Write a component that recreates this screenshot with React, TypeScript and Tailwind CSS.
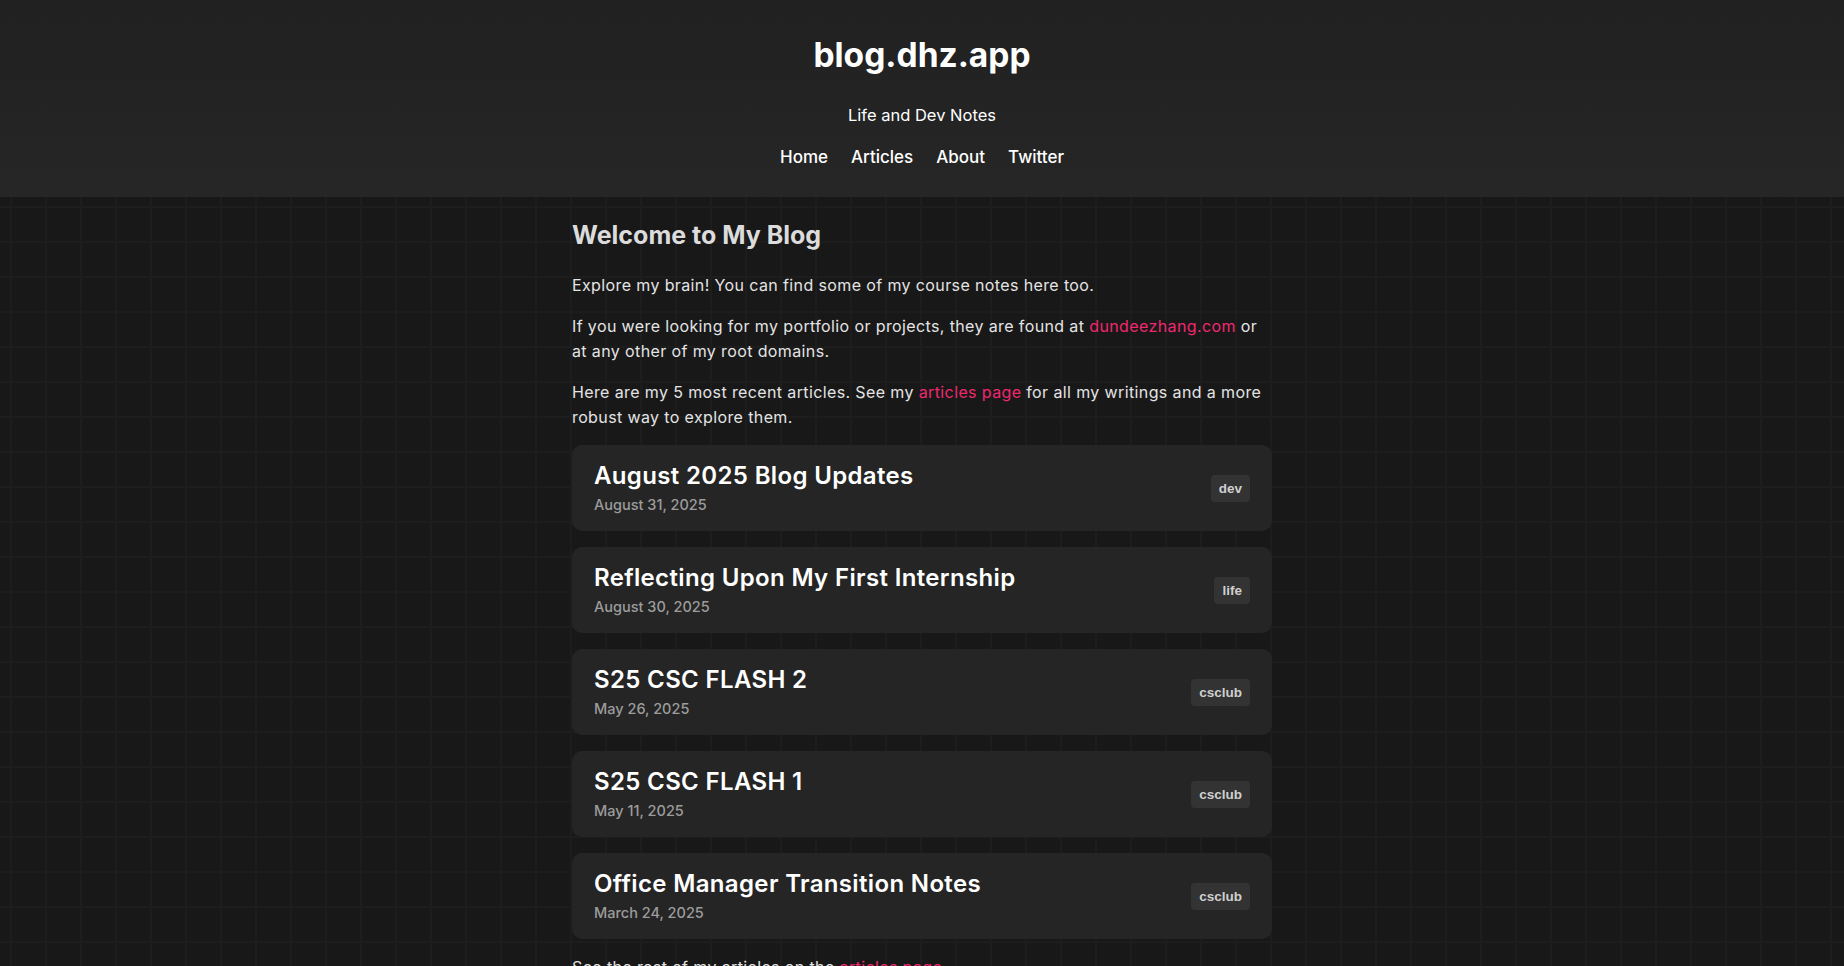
const posts = [
  { title: "August 2025 Blog Updates", date: "August 31, 2025", tag: "dev" },
  { title: "Reflecting Upon My First Internship", date: "August 30, 2025", tag: "life" },
  { title: "S25 CSC FLASH 2", date: "May 26, 2025", tag: "csclub" },
  { title: "S25 CSC FLASH 1", date: "May 11, 2025", tag: "csclub" },
  { title: "Office Manager Transition Notes", date: "March 24, 2025", tag: "csclub" },
];

const navLinks = ["Home", "Articles", "About", "Twitter"];

function PostCard({ title, date, tag }: { title: string; date: string; tag: string }) {
  return (
    <a
      href="#"
      className="flex items-center justify-between rounded-[10px] bg-[#252525] px-[22px] py-[16px]"
    >
      <div className="flex flex-col">
        <h3 className="text-[24px] font-semibold leading-[30px] tracking-[0.35px] text-white">{title}</h3>
        <p className="mt-[3px] text-[14.5px] font-medium leading-[21px] text-[#9c9c9c]">{date}</p>
      </div>
      <span className="rounded-[4px] bg-[#333333] px-[8px] py-[5px] font-['Liberation_Sans',Arial,sans-serif] text-[13.5px] font-bold leading-[17px] text-[#cfcfcf]">
        {tag}
      </span>
    </a>
  );
}

export default function App() {
  return (
    <div className="min-h-screen bg-[#181818] font-['Inter',sans-serif] [background-image:linear-gradient(to_right,#1d1d1d_2px,transparent_2px),linear-gradient(to_bottom,#1d1d1d_2px,transparent_2px)] [background-position:10px_31px] [background-size:35px_35px]">
      <header className="flex h-[197px] flex-col items-center bg-[linear-gradient(to_bottom,rgba(33,33,33,0.94),rgba(39,39,39,0.94))] pt-[34px]">
        <h1 className="text-[33.5px] font-bold leading-[42px] text-white">blog.dhz.app</h1>
        <p className="mt-[27px] text-[16.5px] leading-[24px] text-white">Life and Dev Notes</p>
        <nav className="mt-[18px] flex gap-[23px]">
          {navLinks.map((l) => (
            <a key={l} href="#" className="text-[17px] font-medium leading-[24px] text-white">
              {l}
            </a>
          ))}
        </nav>
      </header>

      <main className="mx-auto max-w-[700px] pt-[22px] pb-10">
        <h2 className="text-[25px] font-bold leading-[32px] text-[#dcdcdc]">Welcome to My Blog</h2>
        <div className="mt-[22px] space-y-[16px] text-[16px] leading-[25px] tracking-[0.38px] text-[#e4e4e4]">
          <p>Explore my brain! You can find some of my course notes here too.</p>
          <p>
            If you were looking for my portfolio or projects, they are found at{" "}
            <a href="#" className="text-[#f0286f]">dundeezhang.com</a> or at any other of my root domains.
          </p>
          <p>
            Here are my 5 most recent articles. See my{" "}
            <a href="#" className="text-[#f0286f]">articles page</a> for all my writings and a more robust way to
            explore them.
          </p>
        </div>

        <div className="mt-[15px] flex flex-col gap-[16px]">
          {posts.map((p) => (
            <PostCard key={p.title} {...p} />
          ))}
        </div>

        <p className="mt-[16px] text-[16px] leading-[25px] tracking-[0.38px] text-[#e4e4e4]">
          See the rest of my articles on the <a href="#" className="text-[#f0286f]">articles page</a>.
        </p>
      </main>
    </div>
  );
}
